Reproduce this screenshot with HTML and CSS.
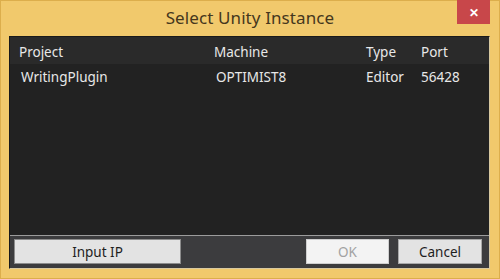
FILE: index.html
```html
<!DOCTYPE html>
<html>
<head>
<meta charset="utf-8">
<link rel="stylesheet" href="styles.css">
</head>
<body>
<div class="window">
  <div class="titlebar">
    <div></div>
    <div class="title">Select Unity Instance</div>
    <div class="close-wrap"><div class="close">✕</div></div>
  </div>
  <div class="panel">
    <div class="list">
      <div class="row head">
        <span class="c1">Project</span>
        <span class="c2">Machine</span>
        <span class="c3">Type</span>
        <span class="c4">Port</span>
      </div>
      <div class="row item">
        <span class="c1">WritingPlugin</span>
        <span class="c2">OPTIMIST8</span>
        <span class="c3">Editor</span>
        <span class="c4">56428</span>
      </div>
    </div>
    <div class="buttons">
      <button class="btn ip">Input IP</button>
      <div class="spacer"></div>
      <button class="btn ok">OK</button>
      <button class="btn cancel">Cancel</button>
    </div>
  </div>
</div>
</body>
</html>
```
FILE: styles.css
```css
html, body {
  margin: 0;
  padding: 0;
}
body {
  width: 500px;
  height: 279px;
  overflow: hidden;
  font-family: "Noto Sans", "Liberation Sans", sans-serif;
}
.window {
  box-sizing: border-box;
  width: 500px;
  height: 279px;
  background: #f1c96c;
  border: 1px solid #dcae4c;
  display: flex;
  flex-direction: column;
}
.titlebar {
  height: 35px;
  display: grid;
  grid-template-columns: 1fr auto 1fr;
}
.title {
  font-size: 17px;
  color: #45371d;
  padding-top: 5px;
  letter-spacing: 0.1px;
}
.close-wrap {
  display: flex;
  justify-content: flex-end;
  align-items: flex-start;
  padding-right: 9px;
  margin-top: -1px;
}
.close {
  width: 33px;
  height: 24px;
  background: #c8474a;
  color: #fff;
  font-size: 12px;
  font-weight: bold;
  display: flex;
  align-items: center;
  justify-content: center;
}
.panel {
  margin: 0 9px 0 8px;
  height: 233px;
  box-sizing: border-box;
  border: 1px solid #1a1a1a;
  border-right-color: #d8c9a0;
  border-bottom-color: #d8c9a0;
  display: flex;
  flex-direction: column;
  background: #3c3c3e;
}
.list {
  flex: 1;
  background: #222222;
  border-bottom: 1px solid #9c9c9c;
}
.row {
  display: grid;
  grid-template-columns: 195px 152px 55px 1fr;
  font-size: 13.5px;
  color: #e8e8e8;
  padding-left: 9px;
}
.row.head {
  height: 24px;
  line-height: 24px;
  padding-top: 3px;
  background: #2a2a2a;
}
.row.item {
  height: 22px;
  line-height: 22px;
  padding-top: 2px;
  padding-left: 11px;
  grid-template-columns: 195px 150px 55px 1fr;
}
.buttons {
  height: 32px;
  box-sizing: border-box;
  padding: 3px 7px 4px 4px;
  display: flex;
  gap: 9px;
}
.spacer {
  flex: 1;
}
.btn {
  font-family: inherit;
  font-size: 13.5px;
  height: 25px;
  padding: 0;
  margin: 0;
  border: 1px solid #a9a9a9;
  background: #e3e3e3;
  color: #1e1e1e;
}
.btn.ip {
  width: 167px;
  border-color: #8c8c8c;
}
.btn.ok {
  width: 83px;
  background: #f3f3f3;
  color: #a2a2a2;
  border-color: #cfcfcf;
}
.btn.cancel {
  width: 84px;
}
```
